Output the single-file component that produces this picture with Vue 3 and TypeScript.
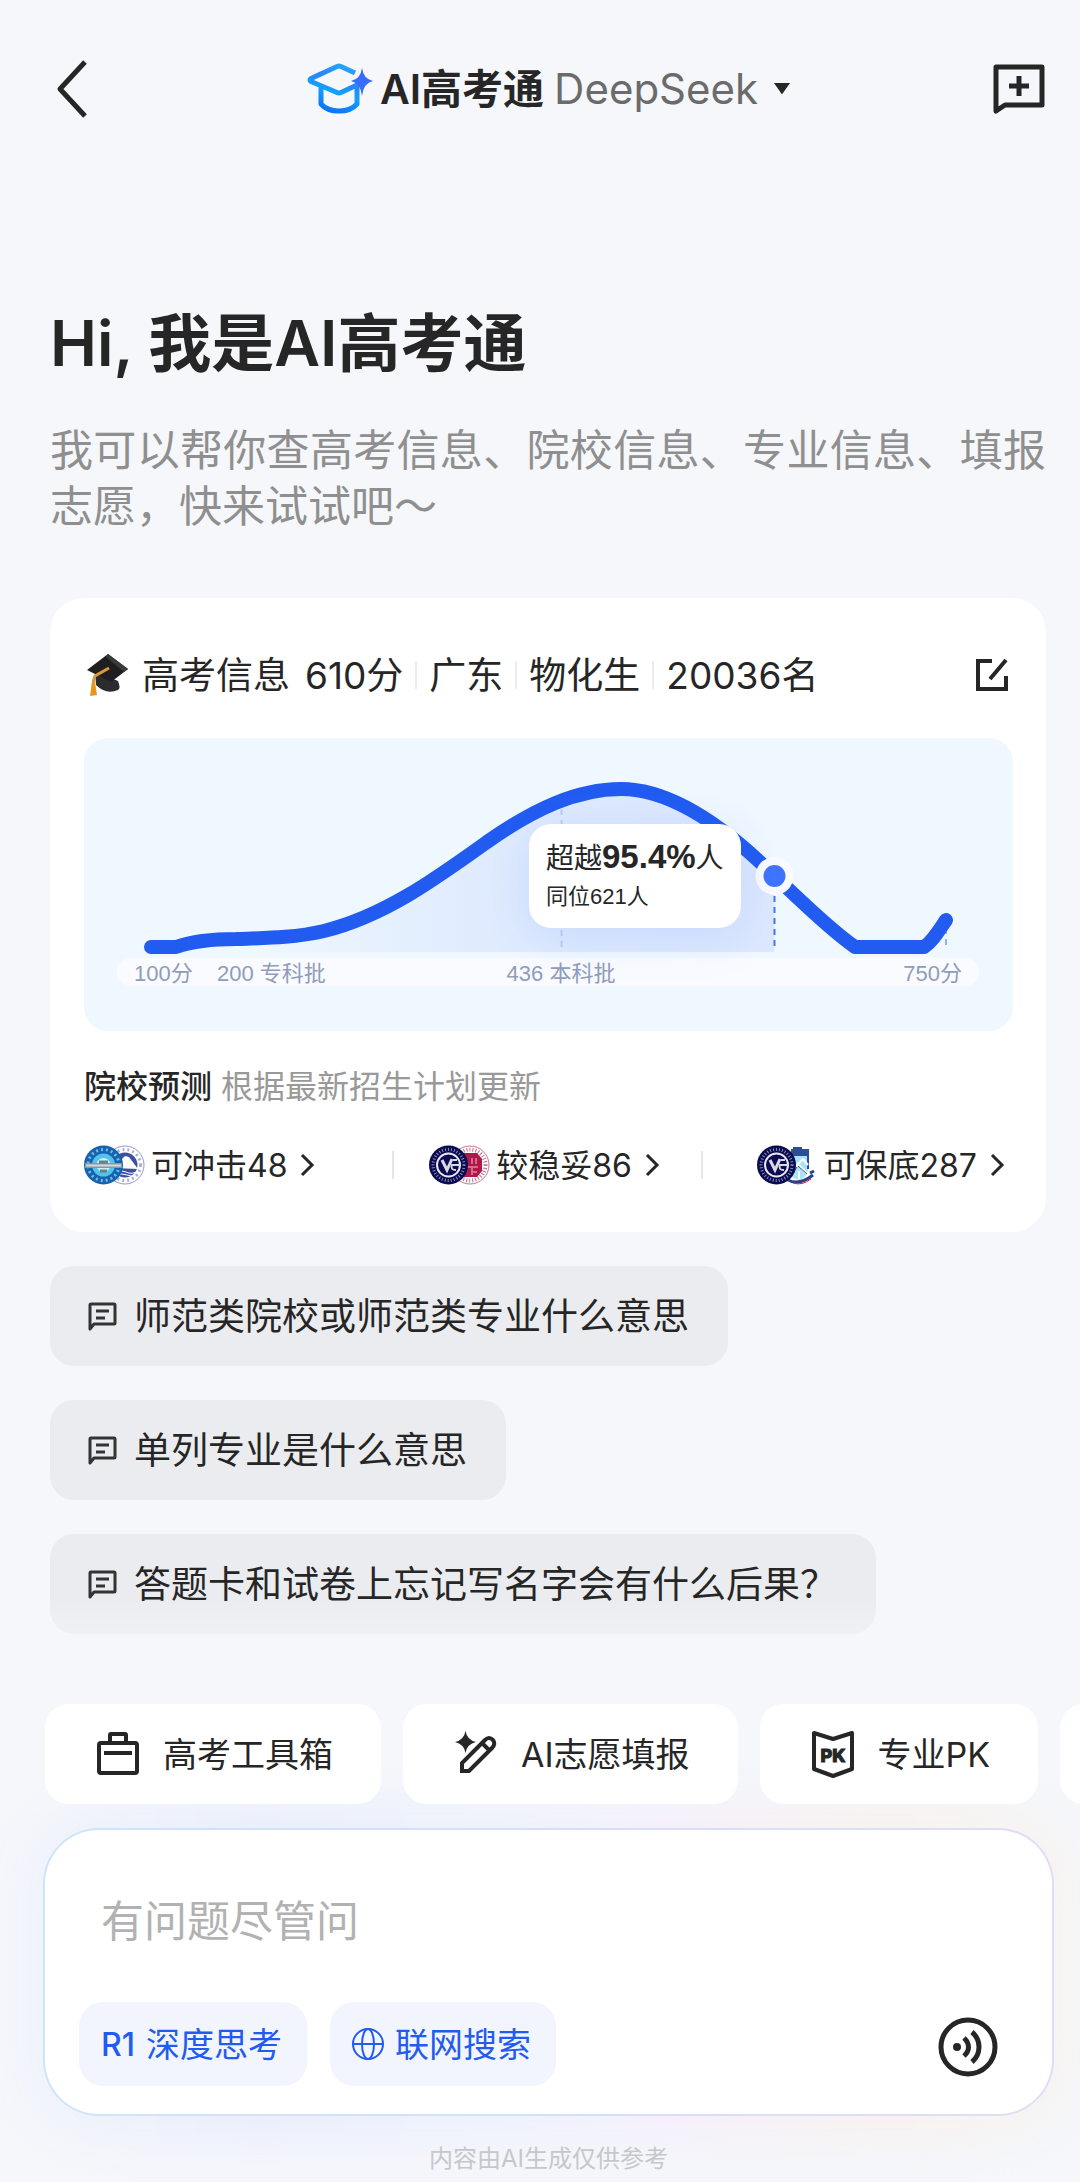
<script setup lang="ts">
import { ref } from 'vue'

interface Prediction {
  label: string
  count: number
  crests: [string, string]
}

interface Tool {
  label: string
  icon: 'toolbox' | 'pen' | 'pk'
}

const examInfo: string[] = ['610分', '广东', '物化生', '20036名']

const predictions: Prediction[] = [
  { label: '可冲击', count: 48, crests: ['ocean', 'mountain'] },
  { label: '较稳妥', count: 86, crests: ['medical', 'seal'] },
  { label: '可保底', count: 287, crests: ['medical', 'shield'] },
]

const suggestions: string[] = [
  '师范类院校或师范类专业什么意思',
  '单列专业是什么意思',
  '答题卡和试卷上忘记写名字会有什么后果？',
]

const tools: Tool[] = [
  { label: '高考工具箱', icon: 'toolbox' },
  { label: 'AI志愿填报', icon: 'pen' },
  { label: '专业PK', icon: 'pk' },
]

/* Score distribution, in the chart's own 929 x 293 units */
const rise =
  'M67 209 H92 C112 202 132 201 152 201 C180 200 210 200 240 193 C300 178 350 142 403 104 C450 71 493 51 537 51 C580 51 630 78 690.5 138'
const curve = `${rise} C715 161 745 191 771 209 H840 C848 204 854 194 862 182`
const area = `${rise} V214 H67 Z`
const tooltipLeft = `${(445 / 929) * 100}%`
const tooltipTop = `${(86 / 293) * 100}%`

const question = ref('')
</script>

<template>
  <div class="page">
    <header class="topbar">
      <button class="icon-btn back" type="button" aria-label="返回">
        <svg width="40" height="60" viewBox="0 0 40 60" fill="none">
          <path d="M35 3 10 30 35 57" stroke="#262626" stroke-width="5" stroke-linejoin="round" />
        </svg>
      </button>
      <button class="brand" type="button">
        <svg width="68" height="56" viewBox="0 0 68 56" fill="none">
          <defs>
            <linearGradient id="logo" x1="20" y1="52" x2="36" y2="4" gradientUnits="userSpaceOnUse">
              <stop offset="0" stop-color="#0a6cff" />
              <stop offset=".45" stop-color="#12a0fb" />
              <stop offset=".7" stop-color="#2a85f8" />
              <stop offset="1" stop-color="#27a4f8" />
            </linearGradient>
          </defs>
          <path
            d="M50 12 36 5.500Q34 4.500 32 5.500L6 17.500Q4 19 6 20.500L32 31.500Q34 32.500 36 31.500L52 24 52 43Q46 50 34 50 22 50 16 43L16 25"
            stroke="url(#logo)"
            stroke-width="5"
            stroke-linejoin="round"
          />
          <path d="M57 7Q58.500 18 68 20 58.500 22 57 35 55.500 22 46 20 55.500 18 57 7Z" fill="#3a6bff" />
        </svg>
        <span class="brand-name">AI高考通</span>
        <span class="brand-model">DeepSeek</span>
        <svg width="18" height="12" viewBox="0 0 18 12"><path d="M1 0H17L10 10Q9 12 8 10Z" fill="#262626" /></svg>
      </button>
      <button class="icon-btn new-chat" type="button" aria-label="新建对话">
        <svg width="54" height="54" viewBox="0 0 54 54" fill="none">
          <path d="M4 49V5H50V43H13Z" stroke="#262626" stroke-width="5" stroke-linejoin="round" />
          <path d="M27 14V34M17 24H37" stroke="#262626" stroke-width="5" />
        </svg>
      </button>
    </header>

    <main class="content">
      <h1 class="greeting">Hi, 我是AI高考通</h1>
      <p class="intro">我可以帮你查高考信息、院校信息、专业信息、填报志愿，快来试试吧～</p>

      <section class="card">
        <div class="card-head">
          <svg class="cap" width="48" height="48" viewBox="0 0 48 48">
            <path d="M11 20 34 30Q37 37 34 39 22 44 12 34Z" fill="#2c2c2e" />
            <path d="M24 3 44 18 27 31 3 19Z" fill="#1f1f21" />
            <path d="M24 3 44 18 40 21 22 6Z" fill="#3a3a3c" />
            <path d="M25 17 11 25Q9 27 9 40" stroke="#d99a36" stroke-width="3" fill="none" />
            <path d="M8 31H11L13 44 6 45Z" fill="#e8951d" />
          </svg>
          <h2 class="card-title label">高考信息</h2>
          <ul class="facts">
            <li v-for="fact in examInfo" :key="fact"><span class="label">{{ fact }}</span></li>
          </ul>
          <button class="icon-btn edit" type="button" aria-label="编辑高考信息">
            <svg width="40" height="38" viewBox="0 0 40 38" fill="none">
              <path d="M19 5H5V33H33V20M33 4 17 23" stroke="#262626" stroke-width="4" />
            </svg>
          </button>
        </div>

        <div class="chart">
          <svg class="plot" viewBox="0 0 929 293" role="img" aria-label="分数分布曲线">
            <defs>
              <linearGradient id="area" x1="150" y1="0" x2="691" y2="0" gradientUnits="userSpaceOnUse">
                <stop offset="0" stop-color="#cfdffd" stop-opacity="0" />
                <stop offset=".45" stop-color="#cfdffd" stop-opacity=".5" />
                <stop offset="1" stop-color="#cfddfc" stop-opacity=".6" />
              </linearGradient>
            </defs>
            <path :d="area" fill="url(#area)" />
            <rect x="33" y="220" width="862" height="28" rx="14" fill="#fafbff" />
            <g stroke-width="2" stroke-dasharray="6 5">
              <path d="M477.500 71V210" stroke="#b9cdfb" />
              <path d="M690.500 158V210" stroke="#4276f5" />
              <path d="M862 190V210" stroke="#8fb0fa" />
            </g>
            <path :d="curve" fill="none" stroke="#225bf0" stroke-width="14" stroke-linecap="round" stroke-linejoin="round" />
            <circle cx="690.5" cy="138" r="19" fill="#fafbff" />
            <circle cx="690.5" cy="138" r="11" fill="#3f74ff" />
            <g class="axis">
              <text x="50" y="243">100分</text>
              <text x="133" y="243">200 专科批</text>
              <text x="477" y="243" text-anchor="middle">436 本科批</text>
              <text x="878" y="243" text-anchor="end">750分</text>
            </g>
          </svg>
          <div class="tooltip" :style="{ left: tooltipLeft, top: tooltipTop }">
            <p class="tooltip-main">超越<strong>95.4%</strong>人</p>
            <p class="tooltip-sub">同位621人</p>
          </div>
        </div>

        <p class="forecast"><b>院校预测</b><span>根据最新招生计划更新</span></p>
        <nav class="predictions">
          <a v-for="item in predictions" :key="item.label" class="prediction" href="#">
            <svg class="crests" width="62" height="40" viewBox="0 0 62 40">
              <g v-if="item.crests[1] === 'mountain'" fill="none">
                <circle cx="41" cy="20" r="19" fill="#fff" stroke="#8e97cf" />
                <circle cx="41" cy="20" r="15.500" stroke="#a6addb" stroke-width="3" stroke-dasharray="2 3" />
                <circle cx="41" cy="20" r="12.500" fill="#3c519f" />
                <path d="M30 23 38 14 41 11 45 12 54 24Z" fill="#fff" />
                <path d="M30 27Q36 24 42 27T54 26M32 30Q38 28 43 30T51 30" stroke="#fff" />
              </g>
              <g v-else-if="item.crests[1] === 'seal'" fill="none">
                <circle cx="41" cy="20" r="19" fill="#fff" stroke="#c7738f" />
                <circle cx="41" cy="20" r="15.500" stroke="#c96a88" stroke-width="4" stroke-dasharray="1 2" />
                <path d="M35 8H48L53 14V26L48 32H35Z" fill="#b0184a" />
                <path d="M43 13V19M47 13V19M38 22H49M43 27H48M43 22V30" stroke="#d56b8c" stroke-width="2" />
              </g>
              <g v-else>
                <path d="M34 3H52V24L57 27Q50 39 38 39L28 33Z" fill="#fff" />
                <path d="M34 4H51V24Q50 33 42 35 34 33 32 28Z" fill="#a9e3f8" />
                <path d="M36 2H45V4H52V11H34V4H36Z" fill="#2d4d94" />
                <path d="M51 10V24" stroke="#2d4d94" stroke-width="2" />
                <path d="M41 19 32 33M41 19 51 30M46 14 40 20M46 14 51 20M42 26V34" stroke="#fff" stroke-width="2" fill="none" />
                <path d="M41 21 50 29M40 22 34 31" stroke="#2d4d94" fill="none" />
                <path d="M31 35Q42 41 56 30M53 28 57 26" stroke="#2b3f86" stroke-width="3" fill="none" />
                <path d="M36 38Q45 41 54 34" stroke="#cf2447" fill="none" />
              </g>
              <g v-if="item.crests[0] === 'ocean'" fill="none">
                <circle cx="19.500" cy="20" r="19.500" fill="#1463ae" />
                <circle cx="19.500" cy="20" r="15.500" stroke="#78b6e2" stroke-width="3" stroke-dasharray="2 3" />
                <circle cx="19.500" cy="20" r="11.500" fill="#53c3ec" />
                <circle cx="19.500" cy="20" r="7" fill="#c3f2f8" />
                <path d="M1 20.500H38" stroke="#8498a8" stroke-width="5" />
                <path d="M2 20.500H37" stroke="#d4dade" stroke-width="2" />
                <path d="M15 17H24M16 26H23" stroke="#6e7e88" stroke-width="3" />
              </g>
              <g v-else fill="none">
                <circle cx="19.500" cy="20" r="19.500" fill="#0b0b52" />
                <circle cx="19.500" cy="20" r="15.500" stroke="#8d8fb4" stroke-width="3" stroke-dasharray="1 2" />
                <circle cx="19.500" cy="20" r="11.500" fill="#0b0b52" stroke="#e8e8f2" stroke-width="2" />
                <path d="M13 15 18 25 23 14" stroke="#d9d9e6" stroke-width="3" />
                <path d="M31 20H23Q21 25 27 25M24 15H28" stroke="#d9d9e6" stroke-width="2" />
              </g>
            </svg>
            <span class="label">{{ item.label }}{{ item.count }}</span>
            <svg class="more" width="30" height="30" viewBox="0 0 30 30" fill="none">
              <path d="M9 5 19 15 9 25" stroke="#262626" stroke-width="3" />
            </svg>
          </a>
        </nav>
      </section>

      <ul class="suggestions">
        <li v-for="text in suggestions" :key="text">
          <button class="suggestion" type="button">
            <svg width="32" height="32" viewBox="0 0 32 32" fill="none">
              <path d="M4 29V5Q4 4 5 4H28Q29 4 29 5V23Q29 24 28 24H8Z" stroke="#333" stroke-width="3" stroke-linejoin="round" />
              <path d="M10 11H23M10 18H19" stroke="#333" stroke-width="3" />
            </svg>
            <span class="label">{{ text }}</span>
          </button>
        </li>
      </ul>
    </main>

    <footer class="dock">
      <div class="tools">
        <button v-for="tool in tools" :key="tool.label" class="tool" type="button">
          <svg width="50" height="50" viewBox="0 0 50 50" fill="none" stroke="#262626" stroke-width="4">
            <template v-if="tool.icon === 'toolbox'">
              <rect x="6" y="14" width="38" height="30" rx="2" />
              <path d="M17 14V6Q17 5 18 5H32Q33 5 33 6V14" />
              <path d="M11 24H39" />
            </template>
            <template v-else-if="tool.icon === 'pen'">
              <path d="M11 42V34L34 11Q38 7 42 11 45 15 41 19L18 42ZM31 14 38 21" />
              <path d="M14.500 2Q16 11 25 13 16 15 14.500 24 13 15 4 13 13 11 14.500 2Z" fill="#262626" stroke="none" />
            </template>
            <template v-else>
              <path d="M6 4 25 10 44 4V40L25 47 6 40Z" stroke-linejoin="round" />
              <text class="pk" x="25" y="33" text-anchor="middle">PK</text>
            </template>
          </svg>
          <span class="label">{{ tool.label }}</span>
        </button>
        <button class="tool" type="button" aria-label="更多工具"></button>
      </div>

      <form class="composer" @submit.prevent>
        <input v-model="question" class="question" type="text" placeholder="有问题尽管问" aria-label="有问题尽管问" />
        <div class="composer-row">
          <button class="mode" type="button"><b>R1</b><span class="label">深度思考</span></button>
          <button class="mode" type="button">
            <svg width="32" height="32" viewBox="0 0 32 32" fill="none" stroke="#225bf0" stroke-width="2">
              <circle cx="16" cy="16" r="15" />
              <ellipse cx="16" cy="16" rx="6" ry="15" />
              <path d="M1 16H31" />
            </svg>
            <span class="label">联网搜索</span>
          </button>
          <button class="icon-btn voice" type="button" aria-label="语音输入">
            <svg width="60" height="60" viewBox="0 0 60 60" fill="none" stroke="#262626">
              <circle cx="30" cy="30" r="27" stroke-width="5" />
              <circle cx="19" cy="30" r="4" fill="#262626" stroke="none" />
              <path d="M26 21Q30.500 25 30.500 30T26 39M34 15Q41 21 41 30T34 45" stroke-width="5" />
            </svg>
          </button>
        </div>
      </form>
      <p class="disclaimer">内容由AI生成仅供参考</p>
    </footer>
  </div>
</template>

<style>
body {
  margin: 0;
  background: #f5f7fb;
}
</style>

<style scoped>
.page {
  position: relative;
  z-index: 0;
  display: flex;
  flex-direction: column;
  min-height: 100vh;
  overflow: hidden;
  background: #f5f7fb;
  color: #262626;
  font-family: Inter, 'Noto Sans CJK SC', sans-serif;
}

h1,
h2,
p,
ul {
  margin: 0;
  padding: 0;
}

ul {
  list-style: none;
}

button {
  margin: 0;
  padding: 0;
  border: 0;
  background: none;
  color: inherit;
  font: inherit;
  cursor: pointer;
}

svg {
  display: block;
  flex: none;
}

/* Optical centring of Chinese labels beside icons */
.label {
  padding-bottom: 4px;
}

.icon-btn {
  display: flex;
  align-items: center;
}

.topbar {
  display: grid;
  grid-template-columns: 1fr auto 1fr;
  align-items: center;
  height: 178px;
  padding: 0 34px 0 50px;
}

.new-chat {
  justify-self: end;
}

.brand {
  display: flex;
  align-items: center;
  font-size: 42px;
  line-height: 56px;
}

.brand-name {
  margin: 0 10px 0 7px;
  font-size: 41px;
  font-weight: 600;
}

.brand-model {
  margin-right: 15px;
  color: #6b6b6b;
}

.content {
  padding: 125px 34px 0 50px;
}

.greeting {
  font-size: 63px;
  font-weight: 600;
  line-height: 80px;
}

.intro {
  margin-top: 39px;
  color: #8f8f8f;
  font-size: 43px;
  line-height: 56px;
  text-align: justify;
}

.card {
  margin-top: 64px;
  padding: 45px 33px 47px 34px;
  border-radius: 34px;
  background: #fff;
}

.card-head {
  display: flex;
  align-items: center;
  height: 64px;
  font-size: 37px;
}

.card-title {
  margin: 0 15px 0 10px;
  font-size: 37px;
  font-weight: 400;
}

.facts {
  display: flex;
  align-items: center;
}

.facts li {
  display: flex;
  align-items: center;
}

.facts li + li::before {
  width: 2px;
  height: 28px;
  margin: 0 12px;
  background: #ececec;
  content: '';
}

.edit {
  margin-left: auto;
}

.chart {
  position: relative;
  margin-top: 31px;
  border-radius: 24px;
  background: #f0f8ff;
}

.plot {
  width: 100%;
  height: auto;
}

.axis {
  fill: #8f9dba;
  font-family: 'Liberation Sans', 'Noto Sans CJK SC', sans-serif;
  font-size: 22px;
}

.tooltip {
  position: absolute;
  padding: 15px 17px;
  border-radius: 22px;
  background: #fff;
  box-shadow: 0 8px 48px rgba(60, 110, 250, 0.14);
  font-family: 'Liberation Sans', 'Noto Sans CJK SC', sans-serif;
  white-space: nowrap;
}

.tooltip-main {
  font-size: 28px;
  line-height: 36px;
}

.tooltip-main strong {
  font-size: 33px;
}

.tooltip-sub {
  margin-top: 4px;
  font-size: 22px;
  line-height: 32px;
}

.forecast {
  display: flex;
  gap: 9px;
  margin-top: 32px;
  color: #999;
  font-size: 32px;
  line-height: 48px;
}

.forecast b {
  color: #262626;
  font-weight: 500;
}

.predictions {
  display: grid;
  grid-template-columns: repeat(3, 1fr);
  margin-top: 34px;
}

.prediction {
  display: flex;
  align-items: center;
  height: 40px;
  color: inherit;
  font-size: 32px;
  text-decoration: none;
}

.prediction:nth-child(2) {
  justify-content: center;
}

.prediction:nth-child(3) {
  justify-content: flex-end;
}

.prediction:not(:last-child) {
  background: linear-gradient(#e6e6e6, #e6e6e6) right center / 2px 28px no-repeat;
}

.crests {
  margin-right: 5px;
}

.more {
  margin-left: 6px;
}

.suggestions {
  display: flex;
  flex-direction: column;
  gap: 34px;
  margin-top: 34px;
}

.suggestion {
  display: flex;
  align-items: center;
  gap: 16px;
  height: 100px;
  padding: 0 39px 0 36px;
  border-radius: 24px;
  background: #ebecef;
  font-size: 37px;
}

.suggestions li:last-child .suggestion {
  background: linear-gradient(#ebecef 65%, #f0f1f5);
}

.dock {
  margin-top: auto;
  padding: 0 26px 7px 43px;
}

.tools {
  position: relative;
  z-index: 1;
  display: flex;
  gap: 22px;
  margin-right: -26px;
  padding-left: 2px;
  overflow: hidden;
}

.tool {
  display: flex;
  flex: none;
  align-items: center;
  gap: 20px;
  height: 100px;
  padding: 0 48px;
  border-radius: 24px;
  background: #fff;
  font-size: 34px;
}

.pk {
  fill: #262626;
  stroke: #262626;
  stroke-width: 1px;
  font-size: 18px;
  font-weight: 800;
}

.composer {
  position: relative;
  margin-top: 24px;
  padding: 47px 54px 28px 34px;
  border: 2px solid transparent;
  border-radius: 56px;
  background:
    linear-gradient(#fff, #fff) padding-box,
    linear-gradient(90deg, #cfe4fb, #d3e0fc 50%, #e2dcf7) border-box;
}

.composer::before {
  position: absolute;
  z-index: -1;
  inset: -24px;
  border-radius: 80px;
  background: linear-gradient(90deg, #f0f3fb, #e8edfc 22%, #edf1fc 45%, #f5effb 62%, #f8f1ec 82%, #f6f4f2);
  filter: blur(22px);
  content: '';
}

.question {
  display: block;
  box-sizing: border-box;
  width: 100%;
  height: 88px;
  padding: 0 0 0 22px;
  border: 0;
  outline: 0;
  background: none;
  color: #262626;
  font-family: inherit;
  font-size: 43px;
}

.question::placeholder {
  color: #b2b2b2;
  opacity: 1;
}

.composer-row {
  display: flex;
  align-items: center;
  gap: 23px;
  margin-top: 37px;
}

.mode {
  display: flex;
  align-items: center;
  gap: 11px;
  height: 84px;
  padding: 0 25px 0 22px;
  border-radius: 24px;
  background: #f2f5fe;
  color: #225bf0;
  font-size: 34px;
}

.mode b {
  font-size: 32px;
  font-weight: 500;
}

.voice {
  margin-top: 6px;
  margin-left: auto;
}

.disclaimer {
  position: relative;
  margin-top: 27px;
  color: #c6c7ca;
  font-size: 24px;
  line-height: 32px;
  text-align: center;
}
</style>
